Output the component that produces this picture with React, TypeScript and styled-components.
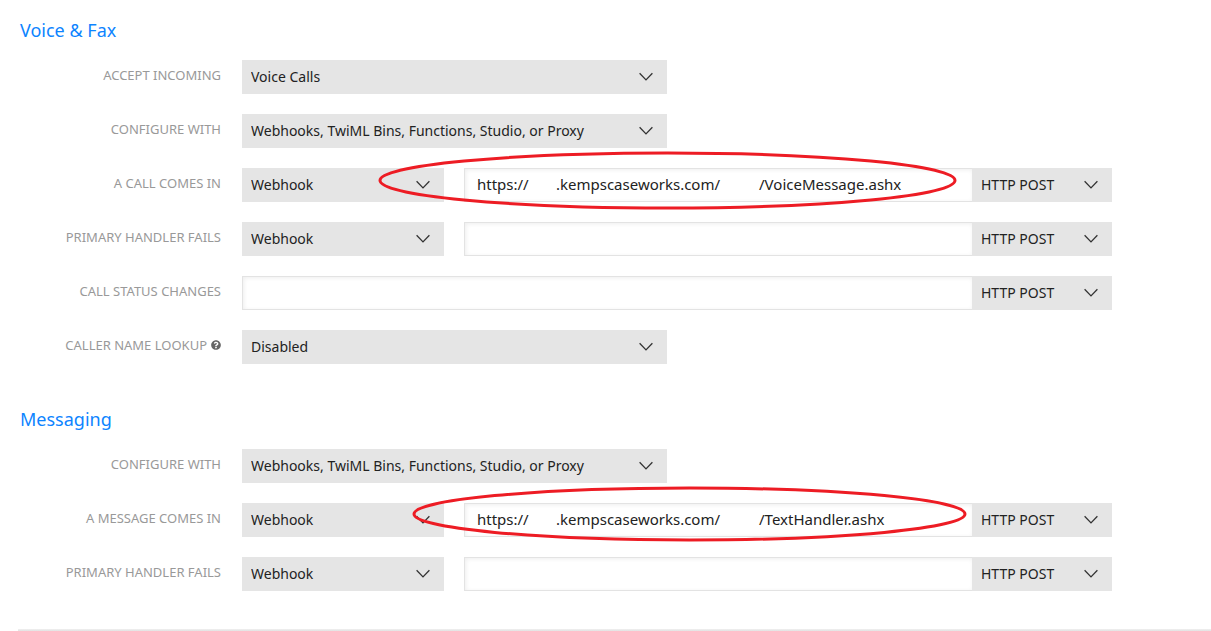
import React, { useId } from "react";
import styled, { createGlobalStyle } from "styled-components";
import { FaQuestionCircle } from "react-icons/fa";

const GlobalStyle = createGlobalStyle`
  *, *::before, *::after { box-sizing: border-box; }
  body {
    margin: 0;
    background: #fff;
    color: #222;
    font-family: "Noto Sans", "Open Sans", sans-serif;
    font-size: 14px;
  }
`;

const Page = styled.main`
  padding: 18px 0 0 20px;
`;

const Section = styled.section`
  margin-bottom: 43px;

  &:last-of-type {
    margin-bottom: 38px;
  }
`;

const Heading = styled.h2`
  margin: 0 0 18px;
  color: #0d84ff;
  font-size: 18px;
  font-weight: 400;
  line-height: 24px;
`;

const Rows = styled.div`
  display: grid;
  gap: 20px;
  padding-right: 99px;
`;

const Row = styled.div`
  display: grid;
  grid-template-columns: 201px minmax(0, 1fr);
  column-gap: 21px;
`;

const LabelCell = styled.div`
  display: flex;
  justify-content: flex-end;
  align-items: center;
  gap: 4px;
  height: 30px;
  color: #999;
`;

const Label = styled.label`
  font-size: 13px;
  text-transform: uppercase;
  white-space: nowrap;
`;

const HelpButton = styled.button`
  display: flex;
  padding: 0;
  border: 0;
  background: none;
  color: #666;
`;

const Fields = styled.div`
  position: relative;
  display: flex;
  gap: 20px;
  height: 34px;
`;

const UrlGroup = styled.div`
  display: flex;
  flex: 1;
  min-width: 0;
`;

const SelectBox = styled.div<{ $width: number }>`
  position: relative;
  flex: none;
  width: ${(p) => p.$width}px;
  max-width: 100%;
  background: #e5e5e5;

  svg {
    position: absolute;
    top: 12px;
    right: 14px;
    pointer-events: none;
  }
`;

const NativeSelect = styled.select`
  appearance: none;
  width: 100%;
  height: 100%;
  padding: 0 36px 2px 9px;
  border: 0;
  border-radius: 0;
  background: transparent;
  color: inherit;
  font: inherit;
`;

const UrlInput = styled.input`
  flex: 1;
  min-width: 0;
  padding: 0 12px 2px;
  border: 1px solid #e3e3e3;
  border-right: 0;
  border-radius: 0;
  background: #fff;
  box-shadow: inset 1px 1px 4px rgba(0, 0, 0, 0.07);
  color: inherit;
  font-family: inherit;
  font-size: 15px;
`;

const Circle = styled.svg<{ $left: number }>`
  position: absolute;
  top: -17px;
  left: ${(p) => p.$left}px;
  pointer-events: none;
`;

const Divider = styled.hr`
  height: 2px;
  margin: 0 0 0 -2px;
  border: 0;
  background: linear-gradient(#f0f0f0, #e2e2e2);
`;

type SelectProps = { value: string; width: number; id?: string; label?: string };

function Select({ value, width, id, label }: SelectProps) {
  return (
    <SelectBox $width={width}>
      <NativeSelect id={id} aria-label={label} defaultValue={value}>
        <option>{value}</option>
      </NativeSelect>
      <svg width="14" height="10" viewBox="0 0 14 10" aria-hidden="true">
        <path d="M0.6 1.3 L7 7.9 L13.4 1.3" fill="none" stroke="#333" strokeWidth="1.3" />
      </svg>
    </SelectBox>
  );
}

type Mark = { left: number; width: number; height: number };

type FieldRowProps = {
  label: string;
  choice?: string;
  wide?: boolean;
  url?: string;
  help?: boolean;
  mark?: Mark;
};

function FieldRow({ label, choice, wide, url, help, mark }: FieldRowProps) {
  const id = useId();
  return (
    <Row>
      <LabelCell>
        <Label htmlFor={id}>{label}</Label>
        {help && (
          <HelpButton type="button" aria-label="About caller name lookup">
            <FaQuestionCircle size={10} />
          </HelpButton>
        )}
      </LabelCell>
      <Fields>
        {choice && <Select id={id} value={choice} width={wide ? 425 : 202} />}
        {url !== undefined && (
          <UrlGroup>
            <UrlInput
              id={choice ? undefined : id}
              aria-label={choice ? `${label} URL` : undefined}
              type="text"
              defaultValue={url}
            />
            <Select value="HTTP POST" width={140} label={`${label} method`} />
          </UrlGroup>
        )}
        {mark && (
          <Circle $left={mark.left} width={mark.width} height={mark.height} aria-hidden="true">
            <ellipse
              cx={mark.width / 2}
              cy={mark.height / 2}
              rx={mark.width / 2 - 2}
              ry={mark.height / 2 - 2}
              fill="none"
              stroke="#ed1c24"
              strokeWidth="3"
            />
          </Circle>
        )}
      </Fields>
    </Row>
  );
}

const gap = (count: number) => "\u00a0".repeat(count);
const host = `https://${gap(7)}.kempscaseworks.com/${gap(10)}`;
const handlers = "Webhooks, TwiML Bins, Functions, Studio, or Proxy";

export default function App() {
  return (
    <>
      <GlobalStyle />
      <Page>
        <Section>
          <Heading>Voice &amp; Fax</Heading>
          <Rows>
            <FieldRow label="Accept incoming" choice="Voice Calls" wide />
            <FieldRow label="Configure with" choice={handlers} wide />
            <FieldRow
              label="A call comes in"
              choice="Webhook"
              url={`${host}/VoiceMessage.ashx`}
              mark={{ left: 136, width: 579, height: 59 }}
            />
            <FieldRow label="Primary handler fails" choice="Webhook" url="" />
            <FieldRow label="Call status changes" url="" />
            <FieldRow label="Caller name lookup" choice="Disabled" wide help />
          </Rows>
        </Section>
        <Section>
          <Heading>Messaging</Heading>
          <Rows>
            <FieldRow label="Configure with" choice={handlers} wide />
            <FieldRow
              label="A message comes in"
              choice="Webhook"
              url={`${host}/TextHandler.ashx`}
              mark={{ left: 170, width: 555, height: 56 }}
            />
            <FieldRow label="Primary handler fails" choice="Webhook" url="" />
          </Rows>
        </Section>
        <Divider />
      </Page>
    </>
  );
}
